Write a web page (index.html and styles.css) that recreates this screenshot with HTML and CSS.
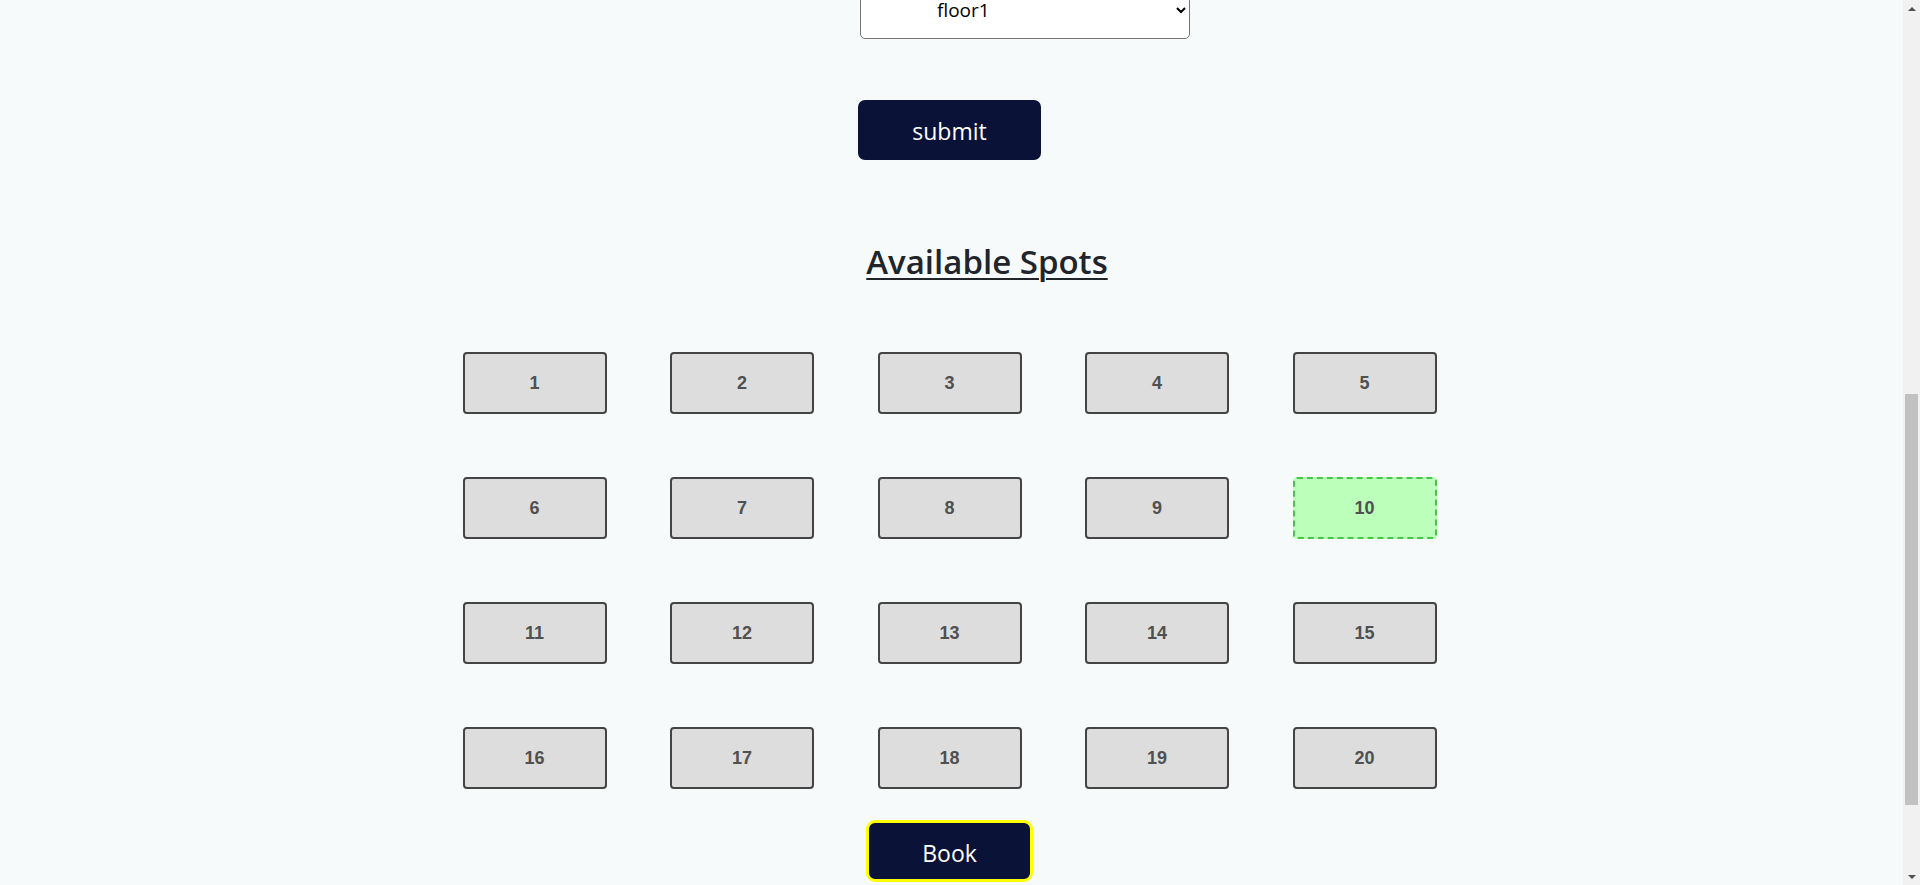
FILE: index.html
```html
<!DOCTYPE html>
<html lang="en">
<head>
<meta charset="utf-8">
<title>Parking Spots</title>
<link rel="stylesheet" href="styles.css">
</head>
<body>
<main class="page">
  <section class="intro">
    <h1 class="intro-title">Parking Booking</h1>
    <p class="intro-text">Choose a date, time and floor to see the spots that are free.</p>
  </section>
  <form class="search">
    <select class="floor-select" name="floor">
      <option>floor1</option>
      <option>floor2</option>
      <option>floor3</option>
    </select>
    <button type="button" class="submit-btn">submit</button>
  </form>
  <section class="spots">
    <h2 class="spots-title">Available Spots</h2>
    <div class="spot-grid">
      <div class="spot">1</div>
      <div class="spot">2</div>
      <div class="spot">3</div>
      <div class="spot">4</div>
      <div class="spot">5</div>
      <div class="spot">6</div>
      <div class="spot">7</div>
      <div class="spot">8</div>
      <div class="spot">9</div>
      <div class="spot spot-selected">10</div>
      <div class="spot">11</div>
      <div class="spot">12</div>
      <div class="spot">13</div>
      <div class="spot">14</div>
      <div class="spot">15</div>
      <div class="spot">16</div>
      <div class="spot">17</div>
      <div class="spot">18</div>
      <div class="spot">19</div>
      <div class="spot">20</div>
    </div>
    <button type="button" class="book-btn">Book</button>
  </section>
</main>
<div class="fake-scrollbar" aria-hidden="true">
  <span class="sb-arrow sb-up"></span>
  <div class="sb-track"><div class="sb-thumb"></div></div>
  <span class="sb-arrow sb-down"></span>
</div>
<script src="script.js"></script>
</body>
</html>
```
FILE: styles.css
```css
html {
  scroll-behavior: auto;
}
body {
  margin: 0;
  background: #f7fafb;
  font-family: "Open Sans", "Noto Sans", sans-serif;
  color: #212529;
}
.page {
  display: flex;
  flex-direction: column;
  align-items: center;
  padding-right: 21px;
  padding-bottom: 138px;
}
.intro {
  height: 793px;
  box-sizing: border-box;
  padding-top: 200px;
  text-align: center;
}
.intro-title {
  margin: 0 0 16px;
  font-size: 40px;
  font-weight: 600;
}
.intro-text {
  margin: 0;
  font-size: 18px;
}
.search {
  display: flex;
  flex-direction: column;
  align-items: center;
}
.floor-select {
  width: 330px;
  height: 58px;
  margin-left: 151px;
  box-sizing: border-box;
  padding: 0 0 0 72px;
  border: 1px solid #767676;
  border-radius: 5px;
  background: #fff;
  font-family: "Open Sans", sans-serif;
  font-size: 19px;
  color: #000;
}
.submit-btn {
  margin-top: 61px;
  width: 183px;
  height: 60px;
  border: none;
  border-radius: 7px;
  background: #0b1238;
  color: #fff;
  font-family: "Open Sans", sans-serif;
  font-size: 23px;
  padding: 2px 0 0;
}
.spots {
  display: flex;
  flex-direction: column;
  align-items: center;
}
.spots-title {
  margin: 84px 0 0 75px;
  font-size: 33px;
  font-weight: 600;
  line-height: 36px;
  text-decoration: underline;
  text-decoration-thickness: 2px;
  text-underline-offset: 4px;
}
.spot-grid {
  margin-top: 72px;
  display: grid;
  grid-template-columns: repeat(5, 144px);
  grid-auto-rows: 62px;
  column-gap: 63.5px;
  row-gap: 63px;
}
.spot {
  display: flex;
  align-items: center;
  justify-content: center;
  box-sizing: border-box;
  border: 2px solid #444;
  border-radius: 4px;
  background: #dddddd;
  font-family: "Liberation Sans", Arial, sans-serif;
  font-weight: bold;
  font-size: 18px;
  color: #505050;
}
.spot-selected {
  background: #bbffbb;
  border: 2px dashed #44c744;
}
.book-btn {
  margin-top: 31px;
  width: 167px;
  height: 62px;
  box-sizing: border-box;
  border: 3px solid #ffff00;
  border-radius: 9px;
  background: #0b1238;
  color: #fff;
  font-family: "Open Sans", sans-serif;
  font-size: 23px;
  padding: 3px 0 0;
}
.fake-scrollbar {
  position: fixed;
  top: 0;
  right: 0;
  width: 17px;
  height: 100vh;
  background: #f1f1f1;
  display: flex;
  flex-direction: column;
}
.sb-arrow {
  height: 17px;
  flex: none;
  display: flex;
  align-items: center;
  justify-content: center;
}
.sb-up::before {
  content: "";
  border-left: 4px solid transparent;
  border-right: 4px solid transparent;
  border-bottom: 4px solid #505050;
}
.sb-down::before {
  content: "";
  border-left: 4px solid transparent;
  border-right: 4px solid transparent;
  border-top: 4px solid #505050;
}
.sb-track {
  flex: 1;
  padding: 377px 2px 0;
}
.sb-thumb {
  height: 411px;
  background: #c1c1c1;
}
```
FILE: script.js
```js
window.scrollTo(0, 812);
window.addEventListener('load', function () {
  window.scrollTo(0, 812);
});
```
